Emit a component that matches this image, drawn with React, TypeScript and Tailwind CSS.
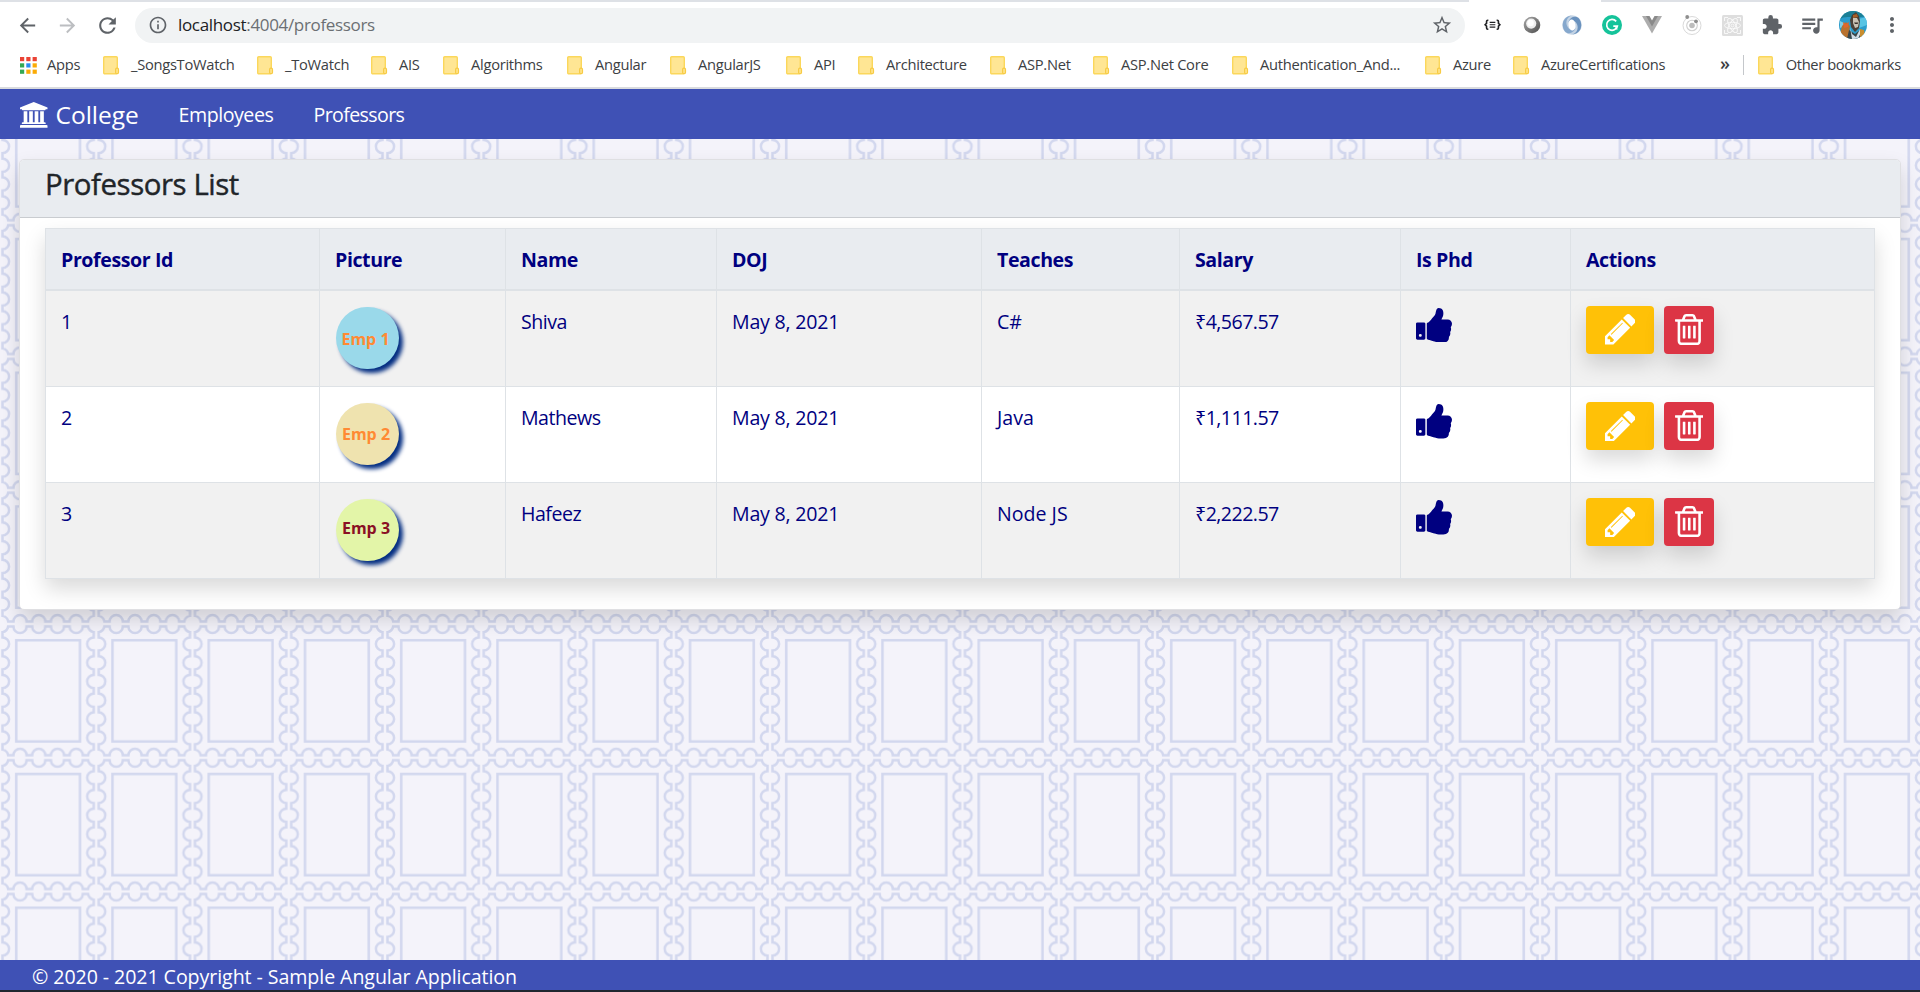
import React from 'react';
import {
  MdArrowBack,
  MdArrowForward,
  MdExtension,
  MdInfoOutline,
  MdMoreVert,
  MdQueueMusic,
  MdRefresh,
  MdStarBorder,
} from 'react-icons/md';

type Bookmark = { label: string; width: string };

const bookmarks: Bookmark[] = [
  { label: '_SongsToWatch', width: 'w-[154px]' },
  { label: '_ToWatch', width: 'w-[114px]' },
  { label: 'AIS', width: 'w-[72px]' },
  { label: 'Algorithms', width: 'w-[124px]' },
  { label: 'Angular', width: 'w-[103px]' },
  { label: 'AngularJS', width: 'w-[116px]' },
  { label: 'API', width: 'w-[72px]' },
  { label: 'Architecture', width: 'w-[132px]' },
  { label: 'ASP.Net', width: 'w-[103px]' },
  { label: 'ASP.Net Core', width: 'w-[139px]' },
  { label: 'Authentication_And...', width: 'w-[193px]' },
  { label: 'Azure', width: 'w-[88px]' },
  { label: 'AzureCertifications', width: 'w-[160px]' },
];

type Professor = {
  id: number;
  name: string;
  doj: string;
  teaches: string;
  salary: string;
  avatar: string;
  label: string;
};

const professors: Professor[] = [
  { id: 1, name: 'Shiva', doj: 'May 8, 2021', teaches: 'C#', salary: '₹4,567.57', avatar: 'bg-[#9ad9ea] text-[#ff8a33]', label: 'pt-[2px] pr-[4px]' },
  { id: 2, name: 'Mathews', doj: 'May 8, 2021', teaches: 'Java', salary: '₹1,111.57', avatar: 'bg-[#efe3af] text-[#ff8a33]', label: 'pr-[3px]' },
  { id: 3, name: 'Hafeez', doj: 'May 8, 2021', teaches: 'Node JS', salary: '₹2,222.57', avatar: 'bg-[#e3f5a8] text-[#8a1024]', label: 'pb-[5px] pr-[3px]' },
];

function BankIcon() {
  return (
    <svg width="27.5" height="25.7" viewBox="0 0 1920 1792" fill="currentColor">
      <path d="M960 0l960 384v128h-128q0 26-20.500 45t-48.500 19h-1526q-28 0-48.500-19t-20.500-45h-128v-128zm-704 640h256v768h128v-768h256v768h128v-768h256v768h128v-768h256v768h59q28 0 48.500 19t20.500 45v64h-1664v-64q0-26 20.500-45t48.500-19h59v-768zm1595 960q28 0 48.500 19t20.500 45v128h-1920v-128q0-26 20.500-45t48.500-19h1782z" />
    </svg>
  );
}

function PencilIcon() {
  return (
    <svg width="30.500" height="30.500" viewBox="0 21 1515 1515" fill="currentColor">
      <path d="M363 1408l91-91-235-235-91 91v107h128v128h107zM886 480q0-22-22-22-10 0-17 7l-542 542q-7 7-7 17 0 22 22 22 10 0 17-7l542-542q7-7 7-17zM832 288l416 416-832 832H0v-416zM1515 384q0 53-37 90l-166 166-416-416 166-165q36-38 90-38 53 0 91 38l235 234q37 39 37 91z" />
    </svg>
  );
}

function TrashIcon() {
  return (
    <svg width="28.500" height="31" viewBox="192 128 1408 1536" fill="currentColor">
      <path d="M704 736v576q0 14-9 23t-23 9h-64q-14 0-23-9t-9-23v-576q0-14 9-23t23-9h64q14 0 23 9t9 23zm256 0v576q0 14-9 23t-23 9h-64q-14 0-23-9t-9-23v-576q0-14 9-23t23-9h64q14 0 23 9t9 23zm256 0v576q0 14-9 23t-23 9h-64q-14 0-23-9t-9-23v-576q0-14 9-23t23-9h64q14 0 23 9t9 23zm128 724v-948h-896v948q0 22 7 40.500t14.500 27 10.500 8.500h832q3 0 10.500-8.500t14.500-27 7-40.500zm-672-1076h448l-48-117q-7-9-17-11h-317q-10 2-17 11zm928 32v64q0 14-9 23t-23 9h-96v948q0 83-47 143.500t-113 60.500h-832q-66 0-113-58.500t-47-141.500v-952h-96q-14 0-23-9t-9-23v-64q0-14 9-23t23-9h309l70-167q15-37 54-63t79-26h320q40 0 79 26t54 63l70 167h309q14 0 23 9t9 23z" />
    </svg>
  );
}

function ThumbsUpIcon() {
  return (
    <svg width="36" height="34.600" viewBox="64 128 1600 1536" fill="currentColor" className="mt-[2px]">
      <path
        transform="translate(0 0)"
        d="M320 1344q0-26-19-45t-45-19q-27 0-45.500 19t-18.500 45q0 27 18.500 45.500t45.500 18.500q26 0 45-18.500t19-45.500zm160-512v640q0 26-19 45t-45 19h-288q-26 0-45-19t-19-45v-640q0-26 19-45t45-19h288q26 0 45 19t19 45zm1184 0q0 86-55 149 15 44 15 76 3 76-43 137 17 56 0 117-15 57-54 94 9 112-49 181-64 76-197 78h-129q-66 0-144-15.500t-121.500-29-120.500-39.500q-123-43-158-44-26-1-45-19.500t-19-44.500v-641q0-25 18-43.500t43-20.500q24-2 76-59t101-121q68-87 101-120 18-18 31-48t17.500-48.500 13.500-60.500q7-39 12.500-61t19.500-52 34-50q19-19 45-19 46 0 82.500 10.500t60 26 40 40.500 24 45 12 50 5 45 .5 39q0 38-9.500 76t-19 60-27.500 56q-3 6-10 18t-11 22-8 24h277q78 0 135 57t57 135z"
      />
    </svg>
  );
}

function FolderIcon() {
  return (
    <svg width="17" height="19" viewBox="0 0 17 19" className="shrink-0">
      <rect x="0.7" y="0.7" width="13.6" height="17.1" rx="1" fill="#ffe694" stroke="#fbd75b" strokeWidth="1.4" />
      <rect x="12.6" y="12.2" width="2.9" height="5.4" rx="1.2" fill="#ffe48a" stroke="#f7cb45" strokeWidth="1.2" />
    </svg>
  );
}

function AppsIcon() {
  const colors = ['#ea4335', '#ea4335', '#ea4335', '#34a853', '#2a8cf0', '#fbab05', '#34a853', '#fbab05', '#fbab05'];
  return (
    <svg width="17" height="17" viewBox="0 0 17 17" className="shrink-0">
      {colors.map((c, i) => (
        <rect key={i} x={(i % 3) * 6.3} y={Math.floor(i / 3) * 6.3} width="4.2" height="4.2" fill={c} />
      ))}
    </svg>
  );
}

function BracesIcon() {
  return (
    <svg width="17" height="11.500" viewBox="0 0 18 12" fill="none" stroke="#202124" strokeWidth="1.7">
      <path d="M4.6 1.2H4a1.3 1.3 0 0 0-1.3 1.3v2L1.2 6l1.5 1.5v2A1.3 1.3 0 0 0 4 10.8h.6" />
      <path d="M13.4 1.2h.6a1.3 1.3 0 0 1 1.3 1.3v2L16.8 6l-1.5 1.5v2a1.3 1.3 0 0 1-1.3 1.3h-.6" />
      <path d="M6 3.5h6M6 6h6M6 8.5h6" strokeWidth="1.1" />
    </svg>
  );
}

function BallIcon() {
  return (
    <svg width="18" height="18" viewBox="0 0 18 18">
      <defs>
        <linearGradient id="ball" x1="0" y1="0" x2="1" y2="1">
          <stop offset="0" stopColor="#a8a8a8" />
          <stop offset="1" stopColor="#4e4e4e" />
        </linearGradient>
      </defs>
      <circle cx="9" cy="9" r="8.3" fill="url(#ball)" />
      <circle cx="8.2" cy="7.6" r="5.1" fill="#efefef" />
      <circle cx="7.6" cy="7" r="3.2" fill="#fff" />
    </svg>
  );
}

function SwirlIcon() {
  return (
    <svg width="20" height="20" viewBox="0 0 20 20">
      <circle cx="10" cy="10" r="9.8" fill="#c3d3e4" />
      <path d="M9.5.5C4 2.500 3 8.500 6 12.500 8 15.500 12 15 13.500 13c-1.500 5-6.500 6.500-10 4C-1 12.500-.5 2 9.500.5z" fill="#86a8cd" />
      <path d="M10.500 19.500c5.500-2 6.500-8 3.500-12C12 4.500 8 5 6.500 7 8 2 13 .5 16.500 3c4.500 4.500 4 15-6 16.500z" fill="#6a92be" />
      <ellipse cx="10" cy="10" rx="3.500" ry="5.500" fill="#fff" transform="rotate(-8 10 10)" />
    </svg>
  );
}

function GrammarIcon() {
  return (
    <svg width="20" height="20" viewBox="0 0 20 20">
      <circle cx="10" cy="10" r="10" fill="#15c39a" />
      <path d="M14.200 6.400A5.400 5.400 0 1 0 15.300 11.200H11.300" fill="none" stroke="#fff" strokeWidth="1.700" />
      <path d="M15.300 10.600v4.300l-2.600-1.700z" fill="#fff" />
    </svg>
  );
}

function VIcon() {
  return (
    <svg width="20" height="18" viewBox="0 0 20 18">
      <path d="M0 0h20L10 17.500z" fill="#adadad" />
      <path d="M4 0h12l-6 10.500z" fill="#8a8a8a" />
      <path d="M7.500 0h5L10 4.500z" fill="#fff" />
    </svg>
  );
}

function OrbitIcon() {
  return (
    <svg width="20" height="20" viewBox="0 0 20 20" fill="none">
      <circle cx="10" cy="10.5" r="9" stroke="#d9d9d9" strokeWidth="1" />
      <circle cx="10" cy="10.5" r="5.3" stroke="#cfcfcf" strokeWidth="1.1" />
      <circle cx="10" cy="10.5" r="2.8" fill="#bdbdbd" />
      <circle cx="5.2" cy="2" r="1.9" fill="#8e8e8e" />
      <circle cx="14" cy="6.3" r="1.9" fill="#8e8e8e" />
    </svg>
  );
}

function AtomTileIcon() {
  return (
    <svg width="21" height="21" viewBox="0 0 21 21" fill="none" stroke="#fbfbfb" strokeWidth="0.9">
      <rect width="21" height="21" rx="1.5" fill="#dedede" stroke="none" />
      <ellipse cx="10.5" cy="10.5" rx="8" ry="3.2" />
      <ellipse cx="10.5" cy="10.5" rx="8" ry="3.2" transform="rotate(60 10.5 10.5)" />
      <ellipse cx="10.5" cy="10.5" rx="8" ry="3.2" transform="rotate(120 10.5 10.5)" />
      <circle cx="10.5" cy="10.5" r="1.4" />
      <path d="M2.5 6V2.5H6M15 2.5h3.5V6M18.5 15v3.5H15M6 18.5H2.5V15" />
    </svg>
  );
}

function ProfileIcon() {
  return (
    <svg width="28" height="28" viewBox="0 0 28 28">
      <defs>
        <clipPath id="profile">
          <circle cx="14" cy="14" r="14" />
        </clipPath>
      </defs>
      <g clipPath="url(#profile)">
        <rect width="28" height="28" fill="#2b9ccb" />
        <path d="M0 0h28v7c-6-3-9 1-13 0S5 5 0 9z" fill="#1b7f95" />
        <path d="M19 8l9-2v8l-8 3z" fill="#58c4e4" />
        <path d="M1 10l4 2 1 3-5 2z" fill="#7fd0e6" />
        <path d="M3 15l4-4 4 4-2 13H0z" fill="#b8722e" />
        <path d="M4 11l3 2 3-2-1 5-4 1z" fill="#e0672a" />
        <path d="M8 28l2-9 6 4 5-4 3 9z" fill="#39464a" />
        <path d="M11 16l2 7 4 3 4-8 1 3-3 7h-6z" fill="#cfdce6" />
        <path d="M13 4l4-3 3 4 1 5-1 7-4 4-4-5-1-7z" fill="#4a4038" />
        <path d="M14 7h4l2 4-1 5-3 1-2-5z" fill="#c9c3b6" />
        <path d="M14 4l4-1 1 3-5 1z" fill="#a85f26" />
        <path d="M15 11.500h4.500l-1 1.500H16z" fill="#3b322c" />
        <path d="M21 18l4 1 1 6-5 3z" fill="#c98d2e" />
      </g>
    </svg>
  );
}

function StampBackground() {
  return (
    <svg className="absolute inset-0 h-full w-full" aria-hidden="true">
      <defs>
        <pattern id="stamps" width="77" height="107" patternUnits="userSpaceOnUse" patternTransform="translate(0 -50) scale(1.25)">
          <g fill="none" stroke="#d2d7ee" strokeWidth="2">
            <rect x="13" y="13" width="51" height="81" />
            <path d="M6.500 2H10.750a5.250 5.250 0 0 0 10.500 0H25.750a5.250 5.250 0 0 0 10.500 0H40.750a5.250 5.250 0 0 0 10.500 0H55.750a5.250 5.250 0 0 0 10.500 0H70.500A5.500 5.500 0 0 0 75 6.500V10.750a5.250 5.250 0 0 0 0 10.500V25.750a5.250 5.250 0 0 0 0 10.500V40.750a5.250 5.250 0 0 0 0 10.500V55.750a5.250 5.250 0 0 0 0 10.500V70.750a5.250 5.250 0 0 0 0 10.500V85.750a5.250 5.250 0 0 0 0 10.500V100.500A5.500 5.500 0 0 0 70.500 105H66.250a5.250 5.250 0 0 0-10.500 0H51.250a5.250 5.250 0 0 0-10.500 0H36.250a5.250 5.250 0 0 0-10.500 0H21.250a5.250 5.250 0 0 0-10.500 0H6.500A5.500 5.500 0 0 0 2 100.500V96.250a5.250 5.250 0 0 0 0-10.500V81.250a5.250 5.250 0 0 0 0-10.500V66.250a5.250 5.250 0 0 0 0-10.500V51.250a5.250 5.250 0 0 0 0-10.500V36.250a5.250 5.250 0 0 0 0-10.500V21.250a5.250 5.250 0 0 0 0-10.500V6.500A5.500 5.500 0 0 0 6.500 2z" />
          </g>
        </pattern>
      </defs>
      <rect width="100%" height="100%" fill="url(#stamps)" />
    </svg>
  );
}

function BrowserChrome() {
  return (
    <header className="flex h-[89px] flex-col border-b-2 border-[#d9dbde] bg-white">
      <div className="flex h-[2px] bg-[#dee1e6] pl-[1469px]">
        <div className="w-[132px] bg-white" />
      </div>
      <div className="flex h-[46px] items-center pl-4 text-[#5f6368]">
        <MdArrowBack className="size-[23px]" />
        <MdArrowForward className="ml-[17px] size-[23px] text-[#bcbec1]" />
        <MdRefresh className="ml-[16px] size-[25px]" />
        <div className="ml-[15px] flex h-[35px] w-[1330px] items-center rounded-full bg-[#f1f3f4] pr-[12px] pl-[13px]">
          <MdInfoOutline className="size-5" />
          <span className="ml-[10px] text-[17px] tracking-[-0.33px] text-[#6b6f73]">
            <span className="text-[#202124]">localhost</span>:4004/professors
          </span>
          <MdStarBorder className="ml-auto size-[22px]" />
        </div>
        <div className="ml-[7px] grid grid-cols-[repeat(9,40px)] place-items-center">
          <BracesIcon />
          <BallIcon />
          <SwirlIcon />
          <GrammarIcon />
          <VIcon />
          <OrbitIcon />
          <AtomTileIcon />
          <MdExtension className="size-[22px]" />
          <MdQueueMusic className="size-[26px]" />
        </div>
        <div className="ml-[7px]">
          <ProfileIcon />
        </div>
        <MdMoreVert className="ml-[13px] size-[24px]" />
      </div>
      <nav className="flex h-[34px] items-center pl-[20px] text-[14.7px] leading-5 tracking-[-0.28px] text-[#3c4043]">
        <div className="flex w-[83px] shrink-0 items-center gap-[10px]">
          <AppsIcon />
          <span className="pb-[2px]">Apps</span>
        </div>
        {bookmarks.map((b) => (
          <div key={b.label} className={`flex shrink-0 items-center gap-[11px] whitespace-nowrap ${b.width}`}>
            <FolderIcon />
            <span className="pb-[2px]">{b.label}</span>
          </div>
        ))}
        <span className="ml-[47px] pb-[5px] text-[18px] font-semibold">»</span>
        <div className="ml-[13px] h-5 w-px bg-[#c4c7cb]" />
        <div className="ml-[14px] flex items-center gap-[11px] whitespace-nowrap tracking-[-0.37px]">
          <FolderIcon />
          <span className="pb-[2px]">Other bookmarks</span>
        </div>
      </nav>
    </header>
  );
}

function Th({ children }: { children: React.ReactNode }) {
  return <th className="border border-b-2 border-[#dee2e6] px-[15px] pt-[2px] text-left font-bold">{children}</th>;
}

function Td({ children, className = '' }: { children: React.ReactNode; className?: string }) {
  return <td className={`border border-[#dee2e6] px-[15px] pt-[15px] align-top ${className}`}>{children}</td>;
}

function ProfessorRow({ professor }: { professor: Professor }) {
  return (
    <tr className="h-[96px] bg-white first:h-[97px] odd:bg-[#f1f1f1]">
      <Td className="pt-[16px]">{professor.id}</Td>
      <Td className="pt-[16px]">
        <div
          className={`ml-px flex h-[62px] w-[63px] items-center justify-center rounded-full text-[16px] font-bold tracking-normal whitespace-nowrap shadow-[4px_4px_4px_#042e82] ${professor.avatar} ${professor.label}`}
        >
          Emp {professor.id}
        </div>
      </Td>
      <Td className="pt-[16px] tracking-[-0.5px]">{professor.name}</Td>
      <Td className="pt-[16px] tracking-[-0.22px]">{professor.doj}</Td>
      <Td className="pt-[16px]">{professor.teaches}</Td>
      <Td className="pt-[16px] tracking-[-0.55px]">{professor.salary}</Td>
      <Td>
        <ThumbsUpIcon />
      </Td>
      <Td>
        <div className="flex gap-[10px] text-white">
          <button className="flex h-12 w-[68px] items-center justify-center rounded-[4px] bg-[#ffc107] shadow-[0_10px_20px_rgba(0,0,0,0.15)]">
            <PencilIcon />
          </button>
          <button className="flex h-12 w-[50px] items-center justify-center rounded-[4px] bg-[#dc3545] pb-px shadow-[0_10px_20px_rgba(0,0,0,0.15)]">
            <TrashIcon />
          </button>
        </div>
      </Td>
    </tr>
  );
}

export default function App() {
  return (
    <div className="flex h-[992px] w-[1920px] flex-col overflow-hidden bg-[#f4f3fa] font-['Open_Sans','Noto_Sans',sans-serif]">
      <BrowserChrome />
      <nav className="flex h-[50px] shrink-0 items-center bg-[#3f51b5] pt-[2px] pl-[20px] text-[19.6px] text-white">
        <BankIcon />
        <span className="ml-[8px] w-[123px] pt-px text-[24.5px]">College</span>
        <span className="w-[135px] tracking-[-0.45px]">Employees</span>
        <span className="tracking-[-0.62px]">Professors</span>
      </nav>
      <main className="relative min-h-0 flex-1 overflow-hidden px-[19px] pt-5">
        <StampBackground />
        <section className="relative h-[451px] rounded-[5px] border border-[#dfdfe2] bg-white shadow-[0_10px_20px_rgba(0,0,0,0.15)]">
          <div className="flex h-[58px] items-center rounded-t-[4px] border-b border-[#c9ccd0] bg-[#e9ecf0] pb-[9px] pl-[25px]">
            <h1 className="text-[29.4px] leading-9 font-medium tracking-[-0.43px] text-[#212529] [-webkit-text-stroke:0.4px_#212529]">
              Professors List
            </h1>
          </div>
          <div className="px-[25px] pt-[10px]">
            <table className="w-[1830px] table-fixed border-collapse text-[19.6px] leading-[30px] text-[#000080] shadow-[0_10px_20px_rgba(0,0,0,0.15)]">
              <colgroup>
                <col className="w-[274px]" />
                <col className="w-[186px]" />
                <col className="w-[211px]" />
                <col className="w-[265px]" />
                <col className="w-[198px]" />
                <col className="w-[221px]" />
                <col className="w-[170px]" />
                <col />
              </colgroup>
              <thead>
                <tr className="h-[61px] bg-[#e9ecf0] tracking-[-0.42px]">
                  <Th>Professor Id</Th>
                  <Th>Picture</Th>
                  <Th>Name</Th>
                  <Th>DOJ</Th>
                  <Th>Teaches</Th>
                  <Th>Salary</Th>
                  <Th>Is Phd</Th>
                  <Th>Actions</Th>
                </tr>
              </thead>
              <tbody>
                {professors.map((p) => (
                  <ProfessorRow key={p.id} professor={p} />
                ))}
              </tbody>
            </table>
          </div>
        </section>
      </main>
      <footer className="flex h-8 shrink-0 items-center border-b-2 border-[#20272f] bg-[#3f51b5] pt-[4px] pl-[32px] text-[19.6px] tracking-[-0.07px] text-white">
        © 2020 - 2021 Copyright - Sample Angular Application
      </footer>
    </div>
  );
}
